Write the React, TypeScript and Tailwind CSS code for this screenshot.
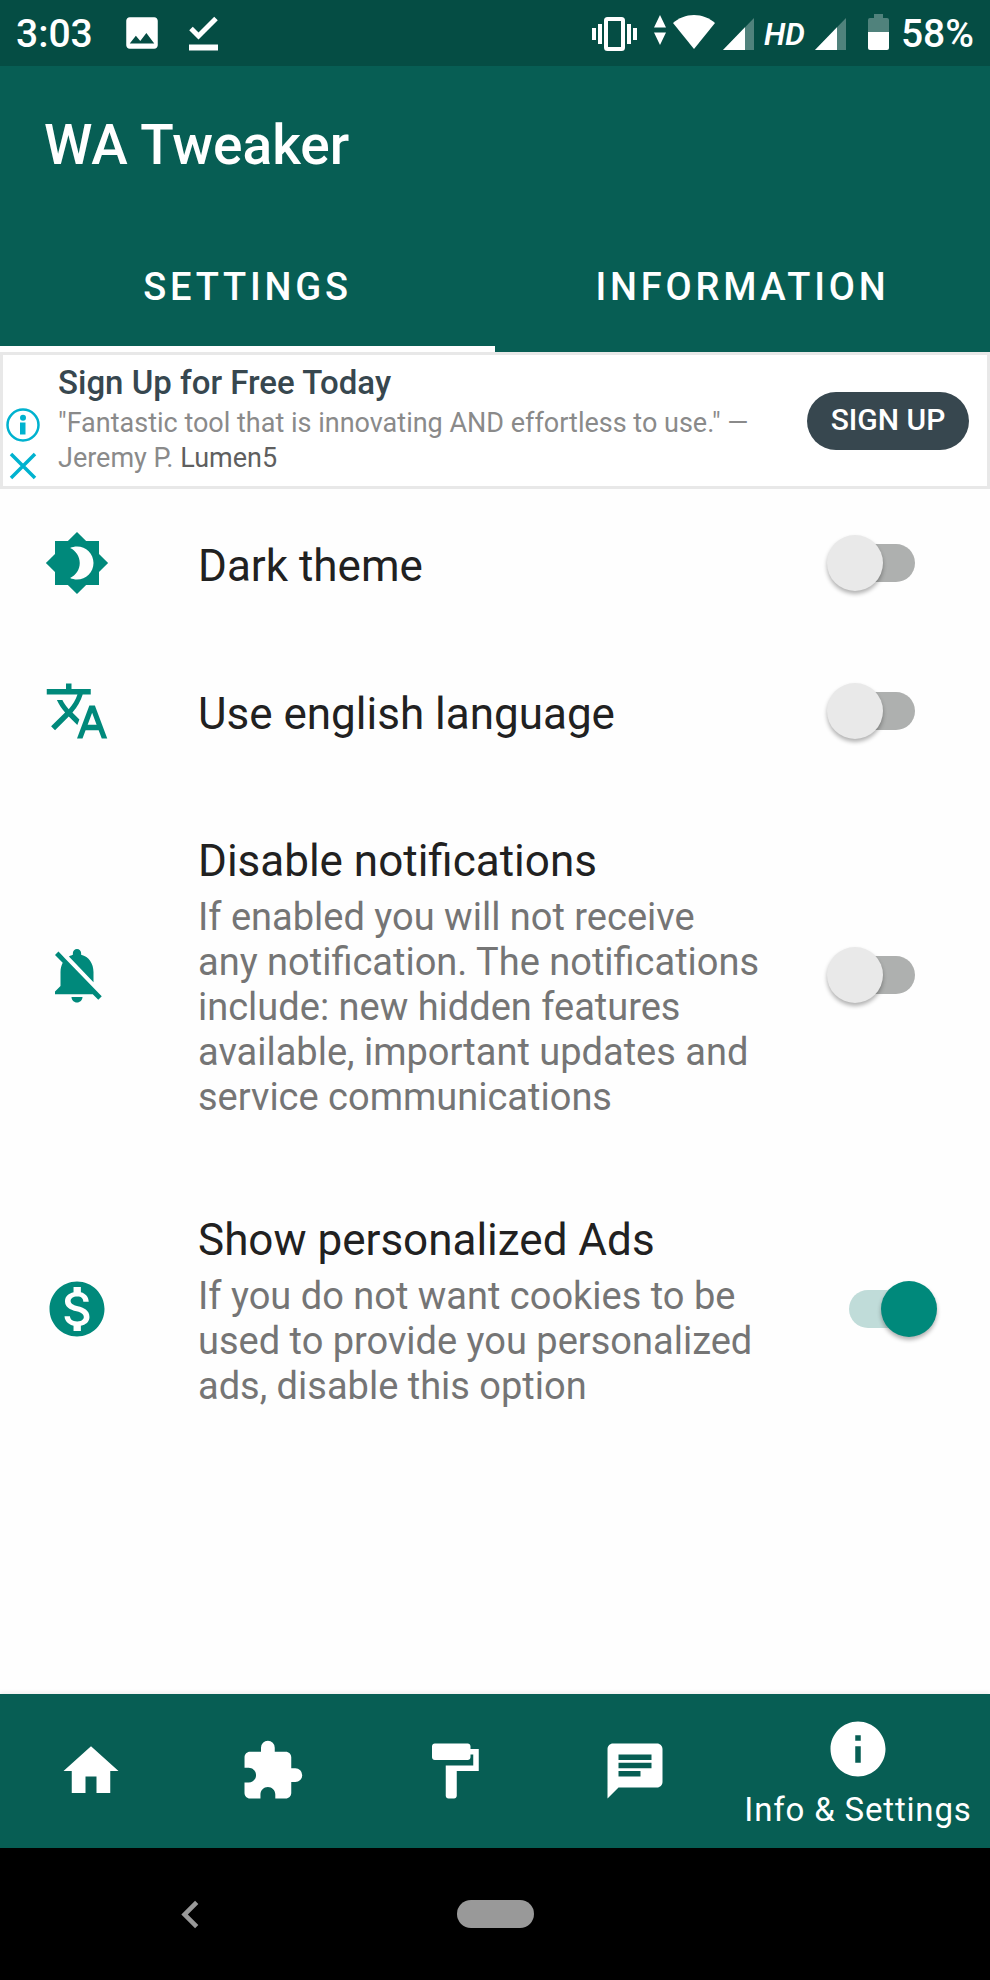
import React, { useState } from 'react';
import {
  MdBrightness4,
  MdChat,
  MdChevronLeft,
  MdExtension,
  MdFormatPaint,
  MdHome,
  MdInfo,
  MdMonetizationOn,
  MdNotificationsOff,
  MdPhoto,
  MdTranslate,
} from 'react-icons/md';

const initialSettings = [
  { id: 'dark', title: 'Dark theme', summary: '', icon: MdBrightness4, on: false },
  { id: 'english', title: 'Use english language', summary: '', icon: MdTranslate, on: false },
  {
    id: 'notifications',
    title: 'Disable notifications',
    summary:
      'If enabled you will not receive any notification. The notifications include: new hidden features available, important updates and service communications',
    icon: MdNotificationsOff,
    on: false,
  },
  {
    id: 'ads',
    title: 'Show personalized Ads',
    summary: 'If you do not want cookies to be used to provide you personalized ads, disable this option',
    icon: MdMonetizationOn,
    on: true,
  },
];

const navItems = [
  { label: 'Home', icon: MdHome },
  { label: 'Extensions', icon: MdExtension },
  { label: 'Themes', icon: MdFormatPaint },
  { label: 'Chat', icon: MdChat },
];

function Signal() {
  return (
    <svg width="31" height="32" viewBox="0 0 31 32" fill="#fff" aria-hidden="true">
      <path d="M31 0v32H0z" opacity=".3" />
      <path d="M22 9.3V32H0z" />
    </svg>
  );
}

function StatusBar() {
  return (
    <div className="flex h-[66px] items-center bg-[#054d44] px-4 pt-0.5 text-[39px] font-medium text-white">
      <span>3:03</span>
      <MdPhoto size={42} className="ml-7 mb-0.5" />
      <svg width="29" height="35" viewBox="0 0 29 35" className="ml-[26px] mb-0.5" aria-hidden="true">
        <path d="M2 12.5l7.5 7.5L27 2.5" fill="none" stroke="#fff" strokeWidth="5" />
        <path d="M0 28.5h29v6H0z" fill="#fff" />
      </svg>
      <div className="ml-auto flex items-center">
        <svg width="45" height="34" viewBox="0 0 45 34" fill="#fff" aria-hidden="true">
          <path d="M0 11h4v12H0zM6 7h4v20H6zM35 7h4v20h-4zM41 11h4v12h-4z" />
          <rect x="14" y="2" width="17" height="30" rx="1.500" fill="none" stroke="#fff" strokeWidth="4" />
        </svg>
        <svg width="12" height="30" viewBox="0 0 12 30" fill="#fff" className="ml-[17px] mb-2" aria-hidden="true">
          <path d="M6 0l6 12.5H0zM6 30l6-12.5H0z" />
        </svg>
        <svg width="42" height="34" viewBox="0 0 42 34" fill="#fff" className="ml-[7px] mb-1" aria-hidden="true">
          <path d="M21 34L0 8C5.500 3 13 0 21 0s15.500 3 21 8z" />
        </svg>
        <div className="ml-2 flex items-center gap-2.5">
          <Signal />
          <span className="text-[31px] font-semibold italic leading-none">HD</span>
          <Signal />
        </div>
        <svg width="21" height="36" viewBox="0 0 21 36" fill="#fff" className="ml-[22px] mr-3 mb-1" aria-hidden="true">
          <path d="M6 0h9v4h4a2 2 0 0 1 2 2v12H0V6a2 2 0 0 1 2-2h4z" opacity=".3" />
          <path d="M0 18h21v16a2 2 0 0 1-2 2H2a2 2 0 0 1-2-2z" />
        </svg>
        <span>58%</span>
      </div>
    </div>
  );
}

function AdBanner() {
  return (
    <aside className="flex items-center border-[3px] border-[#e8e8e8] bg-white pr-[18px]">
      <div className="flex w-[55px] shrink-0 flex-col gap-2.5 self-end pb-1.5 pl-[3px]">
        <button type="button" aria-label="About this ad">
          <svg width="34" height="34" viewBox="0 0 34 34" fill="none" stroke="#00b2cf" aria-hidden="true">
            <circle cx="17" cy="17" r="15.500" strokeWidth="2.500" />
            <circle cx="17" cy="9.700" r="3" fill="#00b2cf" stroke="none" />
            <path d="M14 14.500h5.500v12H14z" fill="#00b2cf" stroke="none" />
          </svg>
        </button>
        <button type="button" aria-label="Close ad">
          <svg width="34" height="28" viewBox="0 0 34 28" stroke="#00b2cf" strokeWidth="3.500" aria-hidden="true">
            <path d="M5 2l24 24M29 2L5 26" />
          </svg>
        </button>
      </div>
      <div className="flex-1 pt-[5px] pb-2.5">
        <p className="text-[33px] font-medium leading-[46px] text-[#37474f]">Sign Up for Free Today</p>
        <p className="text-[27px] leading-[35px] text-[#8a8a8a]">
          "Fantastic tool that is innovating AND effortless to use." — Jeremy P. <span className="text-[#5f5f5f]">Lumen5</span>
        </p>
      </div>
      <button
        type="button"
        className="ml-4 h-[58px] w-[162px] shrink-0 rounded-full bg-[#37474f] pb-0.5 text-[30px] font-medium text-white"
      >
        SIGN UP
      </button>
    </aside>
  );
}

export default function App() {
  const [tab, setTab] = useState('Settings');
  const [settings, setSettings] = useState(initialSettings);

  const toggle = (id: string) => {
    setSettings(settings.map(s => (s.id === id ? { ...s, on: !s.on } : s)));
  };

  return (
    <div className="flex min-h-screen flex-col bg-[#fefefe] font-[Roboto,sans-serif]">
      <StatusBar />
      <header className="bg-[#075e54] text-white">
        <h1 className="flex h-[154px] items-center px-11 pt-1 text-[55px] font-medium">WA Tweaker</h1>
        <div role="tablist" className="flex">
          {['Settings', 'Information'].map(name => (
            <button
              key={name}
              type="button"
              role="tab"
              aria-selected={tab === name}
              onClick={() => setTab(name)}
              className={`h-[132px] flex-1 border-b-6 pt-2 text-[38px] font-medium uppercase tracking-widest ${
                tab === name ? 'border-white' : 'border-transparent'
              }`}
            >
              {name}
            </button>
          ))}
        </div>
      </header>
      <AdBanner />

      <main className="flex-1">
        {settings.map(({ id, title, summary, icon: Icon, on }) => (
          <label key={id} htmlFor={id} className="flex min-h-[148px] items-center pl-11 pr-[53px]">
            <Icon size={66} className="shrink-0 text-[#00897b]" />
            <span className="ml-[88px] flex flex-1 flex-col gap-2 pt-[50px] pb-11">
              <span className="text-[44px] leading-[52px] text-[#212121]">{title}</span>
              {summary && <span className="text-[38px] leading-[45px] text-[#757575]">{summary}</span>}
            </span>
            <input
              id={id}
              type="checkbox"
              role="switch"
              checked={on}
              onChange={() => toggle(id)}
              className="relative ml-[67px] h-[56px] w-[110px] shrink-0 appearance-none before:absolute before:top-[9px] before:left-[22px] before:h-[38px] before:w-[66px] before:rounded-full before:bg-[#aeb0af] after:absolute after:top-0 after:left-0 after:size-[56px] after:rounded-full after:bg-[#e9e9e9] after:shadow-[0_3px_4px_rgba(0,0,0,0.3)] checked:before:bg-[#c0dcd9] checked:after:left-[54px] checked:after:bg-[#00897b]"
            />
          </label>
        ))}
      </main>

      <nav className="flex h-[154px] bg-[#075e54] text-white shadow-[0_-2px_4px_rgba(0,0,0,0.06)]">
        {navItems.map(({ label, icon: Icon }) => (
          <button key={label} type="button" aria-label={label} className="flex flex-1 items-center justify-center">
            <Icon size={66} />
          </button>
        ))}
        <button type="button" className="flex w-[264px] flex-col items-center gap-2 pt-[22px]">
          <MdInfo size={66} />
          <span className="text-[33px] leading-[39px] tracking-wide">Info &amp; Settings</span>
        </button>
      </nav>

      <div className="grid h-[132px] grid-cols-[1fr_77px_1fr] items-center bg-black text-[#999999]">
        <button type="button" aria-label="Back" className="ml-[163px] justify-self-start">
          <MdChevronLeft size={55} />
        </button>
        <button type="button" aria-label="Home screen" className="h-7 rounded-full bg-[#999999]" />
      </div>
    </div>
  );
}
